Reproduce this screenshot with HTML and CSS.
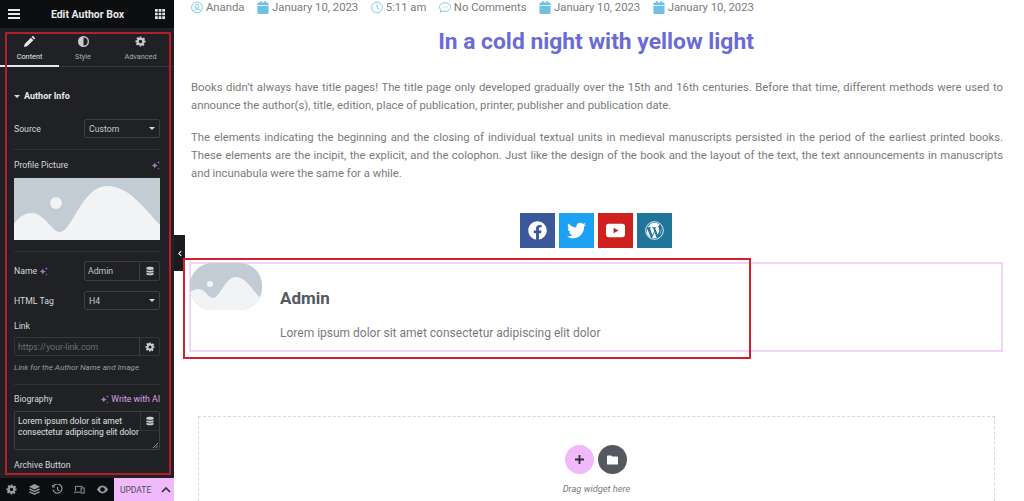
FILE: index.html
```html
<!DOCTYPE html>
<html lang="en">
<head>
    <meta charset="UTF-8">
    <meta name="viewport" content="width=device-width, initial-scale=1.0">
    <title>Edit Author Box</title>
    <link rel="stylesheet" href="styles.css">
</head>
<body>
    <svg class="defs" aria-hidden="true">
        <symbol id="i-cal" viewBox="0 0 12 14"><path d="M3 0h1.6v1.6h2.8V0H9v1.6h1.6A1.4 1.4 0 0 1 12 3v1.4H0V3a1.4 1.4 0 0 1 1.4-1.4H3zM0 5.2h12v7.4A1.4 1.4 0 0 1 10.6 14H1.4A1.4 1.4 0 0 1 0 12.6z"/></symbol>
        <symbol id="i-db" viewBox="0 0 12 14"><path d="M1 2.5C1 .6 11 .6 11 2.500v1.800C11 6 1 6 1 4.300zM1 5.900c2 1.200 8 1.200 10 0v2.200c0 1.700-10 1.700-10 0zM1 9.500c2 1.200 8 1.200 10 0v2c0 1.900-10 1.900-10 0z"/></symbol>
        <symbol id="i-gear" viewBox="0 0 24 24"><path d="M10 1h4l.6 3.2 1.9.8 2.7-1.8 2.8 2.8-1.8 2.7.8 1.9L23 10v4l-3.2.6-.8 1.9 1.8 2.7-2.8 2.8-2.7-1.8-1.9.8L14 23h-4l-.6-3.2-1.9-.8-2.7 1.8-2.8-2.8 1.8-2.7-.8-1.9L1 14v-4l3.2-.6.8-1.9-1.8-2.7 2.8-2.8 2.7 1.8 1.9-.8zM12 8.2a3.8 3.8 0 1 0 0 7.6 3.8 3.8 0 0 0 0-7.6z" fill-rule="evenodd"/></symbol>
        <symbol id="i-spark" viewBox="0 0 12 12"><path d="M5 2l1.2 2.8L9 6 6.2 7.2 5 10 3.8 7.2 1 6l2.8-1.2zM10 0l.5 1.5L12 2l-1.5.5L10 4l-.5-1.5L8 2l1.5-.5zM10 8.500l.4 1.100 1.100.4-1.100.4L10 11.500l-.4-1.100L8.500 10l1.100-.4z"/></symbol>
    </svg>

    <div class="app">
        <aside class="panel">
            <header class="panel-head">
                <span class="burger"><i></i><i></i><i></i></span>
                <span class="panel-title">Edit Author Box</span>
                <svg class="grid-icon" viewBox="0 0 11 11"><path d="M0 0h3v3H0zM4 0h3v3H4zM8 0h3v3H8zM0 4h3v3H0zM4 4h3v3H4zM8 4h3v3H8zM0 8h3v3H0zM4 8h3v3H4zM8 8h3v3H8z"/></svg>
            </header>

            <nav class="tabs">
                <div class="tab active">
                    <svg viewBox="0 0 12 12"><path d="M0 12l.7-3.400L7.500 1.800l2.700 2.700-6.800 6.800zM8.300 1l.8-.8a.8.8 0 0 1 1.100 0l1.600 1.600a.8.8 0 0 1 0 1.100l-.8.8z"/></svg>
                    <span>Content</span>
                </div>
                <div class="tab tab-style">
                    <svg viewBox="0 0 12 12"><path fill-rule="evenodd" d="M6 0a6 6 0 1 1 0 12A6 6 0 0 1 6 0zm0 1.500v9a4.500 4.500 0 0 0 0-9z"/></svg>
                    <span>Style</span>
                </div>
                <div class="tab tab-adv">
                    <svg viewBox="0 0 24 24"><use href="#i-gear"/></svg>
                    <span>Advanced</span>
                </div>
            </nav>

            <div class="controls">
                <h4 class="section-title"><span class="caret"></span>Author Info</h4>

                <div class="row row-source">
                    <label>Source</label>
                    <div class="field select">Custom<span class="caret"></span></div>
                </div>
                <hr>

                <div class="label-line pic-label">
                    <label>Profile Picture</label>
                    <svg class="spark"><use href="#i-spark"/></svg>
                </div>
                <svg class="pic" viewBox="0 0 146 62" preserveAspectRatio="none">
                    <rect width="146" height="62" fill="#c3cbd4"/>
                    <circle cx="42" cy="25" r="6" fill="#f1f3f5"/>
                    <path fill="#f1f3f5" d="M0 46C5 38 12 35 18 35 30 35 38 54 46 54 58 54 68 8 93 8 115 8 130 30 146 47V62H0z"/>
                </svg>
                <hr class="hr-pic">

                <div class="row row-name">
                    <label>Name <svg class="spark"><use href="#i-spark"/></svg></label>
                    <div class="field split">
                        <span class="val">Admin</span>
                        <span class="addon"><svg><use href="#i-db"/></svg></span>
                    </div>
                </div>
                <div class="row row-tag">
                    <label>HTML Tag</label>
                    <div class="field select">H4<span class="caret"></span></div>
                </div>

                <label class="link-label">Link</label>
                <div class="field split link-field">
                    <span class="val placeholder">https://your-link.com</span>
                    <span class="addon"><svg><use href="#i-gear"/></svg></span>
                </div>
                <p class="note">Link for the Author Name and Image</p>
                <hr class="hr-note">

                <div class="label-line bio-label">
                    <label>Biography</label>
                    <span class="ai"><svg class="spark"><use href="#i-spark"/></svg> Write with AI</span>
                </div>
                <div class="textarea">
                    <p>Lorem ipsum dolor sit amet consectetur adipiscing elit dolor</p>
                    <span class="ta-addon"><svg><use href="#i-db"/></svg></span>
                    <svg class="grip" viewBox="0 0 6 6"><path d="M0 6l6-6M3 6l3-3" stroke="#aaa" fill="none"/></svg>
                </div>
                <label class="archive-label">Archive Button</label>
            </div>

            <footer class="panel-foot">
                <div class="foot-icons">
                    <svg viewBox="0 0 24 24"><use href="#i-gear"/></svg>
                    <svg viewBox="0 0 12 12"><path d="M6 0l6 3-6 3-6-3zM1.200 5L6 7.400 10.800 5 12 6 6 9 0 6zM1.200 8L6 10.400 10.800 8 12 9l-6 3-6-3z"/></svg>
                    <svg class="line" viewBox="0 0 12 12"><path d="M1.500 2.500A5 5 0 1 1 1 6"/><path d="M6 3.200V6.300l2 1"/><path d="M.8 1v2.200H3"/></svg>
                    <svg class="line" viewBox="0 0 14 12"><path d="M2 8V2h9"/><path d="M0 9.500h8"/><rect x="9" y="4" width="4" height="6.500"/></svg>
                    <svg viewBox="0 0 14 10"><path fill-rule="evenodd" d="M7 0c3.500 0 6 3 7 5-1 2-3.500 5-7 5S1 7 0 5c1-2 3.500-5 7-5zm0 2a3 3 0 1 0 0 6 3 3 0 0 0 0-6z"/></svg>
                </div>
                <div class="update">
                    <span>UPDATE</span>
                    <svg viewBox="0 0 10 6"><path d="M1 5l4-4 4 4" fill="none" stroke="#33373d" stroke-width="1.700"/></svg>
                </div>
            </footer>
        </aside>

        <main class="page">
            <div class="meta">
                <span class="meta-item">
                    <svg class="line" viewBox="0 0 14 14"><circle cx="7" cy="7" r="6.300"/><circle cx="7" cy="5.500" r="2.300"/><path d="M3 11.500c.5-2 2-2.800 4-2.800s3.500.8 4 2.800"/></svg>
                    Ananda
                </span>
                <span class="meta-item"><svg class="cal"><use href="#i-cal"/></svg>January 10, 2023</span>
                <span class="meta-item">
                    <svg class="line" viewBox="0 0 14 14"><circle cx="7" cy="7" r="6.300"/><path d="M7 3v4.300l2.800 1.600"/></svg>
                    5:11 am
                </span>
                <span class="meta-item">
                    <svg class="line" viewBox="0 0 14 14"><path d="M7 1.500c3.500 0 6.500 2.100 6.500 5s-3 5-6.500 5c-.9 0-1.800-.1-2.500-.4L1.500 12.500l.8-2.600C1.100 9 .5 7.800.5 6.500c0-2.900 3-5 6.500-5z"/><path d="M4 6.500h1M6.500 6.500h1M9 6.500h1"/></svg>
                    No Comments
                </span>
                <span class="meta-item"><svg class="cal"><use href="#i-cal"/></svg>January 10, 2023</span>
                <span class="meta-item"><svg class="cal"><use href="#i-cal"/></svg>January 10, 2023</span>
            </div>

            <h1 class="post-title">In a cold night with yellow light</h1>

            <div class="post-body">
                <p>Books didn’t always have title pages! The title page only developed gradually over the 15th and 16th centuries. Before that time, different methods were used to announce the author(s), title, edition, place of publication, printer, publisher and publication date.</p>
                <p>The elements indicating the beginning and the closing of individual textual units in medieval manuscripts persisted in the period of the earliest printed books. These elements are the incipit, the explicit, and the colophon. Just like the design of the book and the layout of the text, the text announcements in manuscripts and incunabula were the same for a while.</p>
            </div>

            <div class="social">
                <a class="fb"><svg viewBox="0 0 512 512"><path d="M504 256C504 119 393 8 256 8S8 119 8 256c0 123.780 90.690 226.380 209.250 245V327.690h-63V256h63v-54.640c0-62.150 37-96.480 93.670-96.480 27.140 0 55.520 4.840 55.520 4.840v61h-31.280c-30.800 0-40.410 19.120-40.410 38.730V256h68.780l-11 71.690h-57.780V501C413.310 482.380 504 379.780 504 256z"/></svg></a>
                <a class="tw"><svg viewBox="0 0 512 512"><path d="M459.370 151.716c.325 4.548.325 9.097.325 13.645 0 138.720-105.583 298.558-298.558 298.558-59.452 0-114.680-17.219-161.137-47.106 8.447.974 16.568 1.299 25.340 1.299 49.055 0 94.213-16.568 130.274-44.832-46.132-.975-84.792-31.188-98.112-72.772 6.498.974 12.995 1.624 19.818 1.624 9.421 0 18.843-1.300 27.614-3.573-48.081-9.747-84.143-51.980-84.143-102.985v-1.299c13.969 7.797 30.214 12.670 47.431 13.319-28.264-18.843-46.781-51.005-46.781-87.391 0-19.492 5.197-37.360 14.294-52.954 51.655 63.675 129.300 105.258 216.365 109.807-1.624-7.797-2.599-15.918-2.599-24.040 0-57.828 46.782-104.934 104.934-104.934 30.213 0 57.502 12.670 76.670 33.137 23.715-4.548 46.456-13.320 66.599-25.340-7.798 24.366-24.366 44.833-46.132 57.827 21.117-2.273 41.584-8.122 60.426-16.243-14.292 20.791-32.161 39.308-52.628 54.253z"/></svg></a>
                <a class="yt"><svg viewBox="0 0 20 14"><path fill-rule="evenodd" d="M3 0h14a3 3 0 0 1 3 3v8a3 3 0 0 1-3 3H3a3 3 0 0 1-3-3V3a3 3 0 0 1 3-3zm5 4v6l5.200-3z"/></svg></a>
                <a class="wp"><svg viewBox="0 0 20 20"><circle cx="10" cy="10" r="9.300" fill="none" stroke="#fff" stroke-width=".9"/><path d="M10 1.800a8.200 8.200 0 0 1 5.700 2.300c-1.300 0-2 1-1.600 2.300l1 3-1.600 5L10.700 7.600l1-.2V6.600H7.600v.8l1 .2 1 2.900-1.800 4.400-2.500-7.300 1-.2V6.600H3c1.400-2.900 4-4.800 7-4.800zM2.400 8.200l3.800 9.600A8.200 8.200 0 0 1 2.400 8.200zM10 11.500l2.300 6.200a8.200 8.200 0 0 1-4.700.1zM16.700 6c.9 2.700.6 6-1.300 8.500l1.300-4.200c.4-1.300.3-3 0-4.300z"/></svg></a>
            </div>

            <section class="author-box">
                <svg class="avatar" viewBox="0 0 72 47" preserveAspectRatio="none">
                    <rect width="72" height="47" fill="#c3cbd4"/>
                    <circle cx="20" cy="21" r="3" fill="#f1f3f5"/>
                    <path fill="#f1f3f5" d="M0 29C3 27 6 26 9 26 15 26 18 35 23 35 30 35 35 14 46 14 56 14 63 28 72 37V47H0z"/>
                </svg>
                <div class="author-text">
                    <h4>Admin</h4>
                    <p>Lorem ipsum dolor sit amet consectetur adipiscing elit dolor</p>
                </div>
            </section>

            <div class="dropzone">
                <div class="drop-btns">
                    <span class="drop-add"><svg viewBox="0 0 10 10"><path d="M4 0h2v4h4v2H6v4H4V6H0V4h4z"/></svg></span>
                    <span class="drop-folder"><svg viewBox="0 0 12 10"><path d="M1 0h3.500l1.200 1.300H11a1 1 0 0 1 1 1V9a1 1 0 0 1-1 1H1a1 1 0 0 1-1-1V1a1 1 0 0 1 1-1z"/></svg></span>
                </div>
                <p>Drag widget here</p>
            </div>
        </main>
    </div>

    <!-- annotation + panel toggle sit over the page -->
    <div class="toggle"><svg viewBox="0 0 5 8"><path d="M4 1L1 4l3 3" fill="none" stroke="#fff" stroke-width="1.300"/></svg></div>
    <div class="mark mark-panel"></div>
    <div class="mark mark-box"></div>
</body>
</html>
```

FILE: styles.css
```css
* { box-sizing: border-box; }
html, body {
    margin: 0;
    height: 100%;
    overflow: hidden;
}
body {
    font-family: Roboto, "Liberation Sans", sans-serif;
    background: white;
    position: relative;
}
.defs { display: none; }
.app {
    display: flex;
    height: 501px;
}

/* left panel */
.panel {
    width: 174px;
    flex-shrink: 0;
    height: 501px;
    display: flex;
    flex-direction: column;
    background: #1f2124;
    color: #d5d8dc;
    font-size: 8.700px;
}
.panel-head {
    height: 28px;
    flex-shrink: 0;
    background: #0c0d0e;
    display: flex;
    align-items: center;
    justify-content: space-between;
    padding: 0 9px 0 8px;
}
.burger {
    display: flex;
    flex-direction: column;
    gap: 2px;
    width: 12px;
}
.burger i {
    display: block;
    height: 2px;
    background: #e6e8ea;
}
.panel-title {
    color: #e6e8ea;
    font-size: 10.500px;
    font-weight: 700;
}
.grid-icon {
    width: 10px;
    height: 10px;
    fill: #e6e8ea;
}
.tabs {
    height: 39px;
    flex-shrink: 0;
    display: flex;
    border-bottom: 1px solid #34383c;
}
.tab {
    width: 59px;
    display: flex;
    flex-direction: column;
    align-items: center;
    padding-top: 8px;
    gap: 5px;
    font-size: 7.300px;
    color: #a4afb7;
}
.tab-style { width: 48px; }
.tab-adv { width: 67px; }
.tab svg {
    width: 11px;
    height: 11px;
    fill: #c8ccd0;
}
.tab.active {
    color: #e6e8ea;
    border-bottom: 2px solid #e6e8ea;
    height: 39px;
}
.tab.active svg { fill: #e6e8ea; }
.controls {
    flex: 1;
    overflow: hidden;
    padding: 0 14px;
}
.caret {
    display: inline-block;
    border-left: 3px solid transparent;
    border-right: 3px solid transparent;
    border-top: 3px solid #d5d8dc;
}
.section-title {
    margin: 23px 0 0;
    font-size: 9px;
    font-weight: 700;
    line-height: 12px;
    color: #e6e8ea;
    display: flex;
    align-items: center;
    gap: 4px;
}
.row {
    display: flex;
    align-items: center;
    justify-content: space-between;
}
.row label { display: flex; align-items: center; gap: 2px; }
.row-source { margin-top: 17px; }
.row-name { margin-top: 9px; }
.row-tag { margin-top: 10px; }
.field {
    width: 76px;
    height: 20px;
    border: 1px solid #3a3f45;
    border-radius: 2px;
    display: flex;
    align-items: center;
    justify-content: space-between;
    color: #c5c8cc;
}
.select { padding: 0 4px; height: 19px; }
.split .val {
    flex: 1;
    padding-left: 3px;
}
.split .addon {
    width: 20px;
    height: 100%;
    border-left: 1px solid #3a3f45;
    display: flex;
    align-items: center;
    justify-content: center;
}
.addon svg {
    width: 10px;
    height: 10px;
    fill: #c8ccd0;
}
hr {
    border: 0;
    border-top: 1px solid #2e3236;
    margin: 11px 0 0;
}
.label-line {
    display: flex;
    align-items: center;
    justify-content: space-between;
}
.pic-label { margin-top: 9px; height: 12px; }
.spark {
    width: 9px;
    height: 9px;
    fill: #a678c0;
}
.pic {
    display: block;
    width: 146px;
    height: 62px;
    margin-top: 7px;
}
.hr-pic { margin-top: 11px; }
.link-label {
    display: block;
    margin-top: 10px;
    line-height: 12px;
}
.link-field {
    width: 146px;
    height: 19px;
    margin-top: 5px;
    border-color: #33373c;
}
.placeholder { color: #6b7076; }
.note {
    margin: 7px 0 0;
    font-size: 8px;
    font-style: italic;
    line-height: 10px;
    color: #9a9da0;
}
.hr-note { margin-top: 11px; }
.bio-label { margin-top: 8px; height: 12px; }
.ai {
    color: #d9a6ea;
    display: flex;
    align-items: center;
    gap: 2px;
}
.textarea {
    position: relative;
    height: 39px;
    margin-top: 6px;
    border: 1px solid #3a3f45;
    border-radius: 2px;
    padding: 4px 3px;
}
.textarea p {
    margin: 0;
    font-size: 8.500px;
    line-height: 10.500px;
    color: #dfe1e3;
}
.ta-addon {
    position: absolute;
    top: 0;
    right: 0;
    width: 19px;
    height: 19px;
    background: #1f2124;
    border-left: 1px solid #33373c;
    border-bottom: 1px solid #33373c;
    display: flex;
    align-items: center;
    justify-content: center;
}
.ta-addon svg {
    width: 10px;
    height: 10px;
    fill: #c8ccd0;
}
.grip {
    position: absolute;
    right: 1px;
    bottom: 1px;
    width: 5px;
    height: 5px;
}
.archive-label {
    display: block;
    margin-top: 9px;
    line-height: 12px;
}
.panel-foot {
    height: 23px;
    flex-shrink: 0;
    background: #0c0d0e;
    display: flex;
}
.foot-icons {
    flex: 1;
    display: flex;
    align-items: center;
    justify-content: space-between;
    padding: 0 6px;
}
.foot-icons svg {
    width: 11px;
    height: 11px;
    fill: #9a9da0;
}
.foot-icons .line {
    fill: none;
    stroke: #9a9da0;
    stroke-width: 1.200;
}
.update {
    width: 60px;
    background: #f0b9fb;
    color: #4b4f55;
    font-size: 8.500px;
    display: flex;
    align-items: center;
    justify-content: space-between;
    padding: 0 3px 0 6px;
}
.update svg {
    width: 10px;
    height: 6px;
}

/* page content */
.page {
    flex: 1;
    min-width: 0;
    padding: 0 21px 0 15px;
}
.meta {
    display: flex;
    align-items: center;
    gap: 12.500px;
    height: 15px;
    margin-left: 2px;
    font-size: 11.300px;
    color: #7a7a7a;
    white-space: nowrap;
}
.meta-item {
    display: flex;
    align-items: center;
    gap: 3px;
}
.meta-item svg {
    width: 12px;
    height: 13px;
}
.meta-item .line {
    fill: none;
    stroke: #6ec1e4;
    stroke-width: 1;
}
.meta-item .cal { fill: #6ec1e4; }
.post-title {
    margin: 12px 0 0;
    text-align: center;
    font-size: 22.800px;
    font-weight: 700;
    line-height: 30px;
    color: #6a6bd6;
}
.post-body {
    margin: 22px 0 0 2px;
    font-size: 11.300px;
    line-height: 18px;
    color: #7a7a7a;
    text-align: justify;
}
.post-body p { margin: 0 0 14px; }
.social {
    display: flex;
    justify-content: center;
    gap: 4px;
    margin-top: 30px;
}
.social a {
    width: 35px;
    height: 35px;
    display: flex;
    align-items: center;
    justify-content: center;
}
.social svg {
    width: 19px;
    height: 19px;
    fill: white;
}
.social .fb { background: #3b5998; }
.social .tw { background: #1da1f2; }
.social .yt { background: #cd201f; }
.social .wp { background: #21759b; }
.author-box {
    margin-top: 14px;
    height: 90px;
    border: 2px solid #f3d3f7;
    display: flex;
}
.avatar {
    display: block;
    width: 72px;
    height: 47px;
    border-radius: 22px;
    flex-shrink: 0;
    margin-left: -1px;
    margin-top: -1px;
}
.author-text { margin-left: 18px; }
.author-text h4 {
    margin: 24px 0 0;
    font-size: 17px;
    font-weight: 700;
    line-height: 20px;
    color: #54595f;
}
.author-text p {
    margin: 17px 0 0;
    font-size: 12px;
    line-height: 16px;
    color: #7a7a7a;
}
.dropzone {
    margin: 64px 8px 0 9px;
    height: 85px;
    border: 1px dashed #d5d8dc;
    border-bottom: 0;
    text-align: center;
    padding-top: 28px;
}
.drop-btns {
    display: flex;
    justify-content: center;
    gap: 4px;
    padding-right: 1px;
}
.drop-btns span {
    width: 29px;
    height: 29px;
    border-radius: 50%;
    display: flex;
    align-items: center;
    justify-content: center;
}
.drop-add { background: #f0b9fb; }
.drop-add svg {
    width: 9px;
    height: 9px;
    fill: #2c2f36;
}
.drop-folder { background: #54595f; }
.drop-folder svg {
    width: 11px;
    height: 10px;
    fill: white;
}
.dropzone p {
    margin: 9px 0 0;
    font-size: 9.300px;
    line-height: 11px;
    font-style: italic;
    color: #7a7a7a;
}

/* overlays */
.toggle {
    position: absolute;
    left: 174px;
    top: 235px;
    width: 11px;
    height: 36px;
    background: #1a1c1f;
    display: flex;
    align-items: center;
    justify-content: center;
}
.toggle svg { width: 4px; height: 7px; }
.mark {
    position: absolute;
    border: 2px solid #d4202e;
}
.mark-panel {
    border-color: #b3202c;
    left: 5px;
    top: 32px;
    width: 166px;
    height: 443px;
}
.mark-box {
    left: 183px;
    top: 258px;
    width: 568px;
    height: 101px;
}
```
